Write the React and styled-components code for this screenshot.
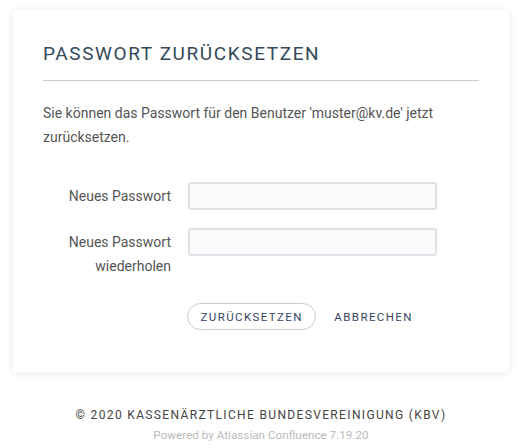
import React from "react";
import styled, { createGlobalStyle } from "styled-components";

const GlobalStyle = createGlobalStyle`
  body {
    margin: 0;
    background: #ffffff;
    font-family: Roboto, "Liberation Sans", sans-serif;
  }
  * {
    box-sizing: border-box;
  }
`;

const Page = styled.div`
  padding: 10px 18px 0 13px;
`;

const Card = styled.div`
  background: #ffffff;
  box-shadow: 0 1px 8px rgba(0, 0, 0, 0.09);
  padding: 32px 30px 42px 30px;
`;

const Heading = styled.h1`
  margin: 0;
  padding-bottom: 14px;
  border-bottom: 1px solid #cccccc;
  font-size: 19px;
  line-height: 24px;
  font-weight: 400;
  letter-spacing: 1.6px;
  color: #34495a;
`;

const Intro = styled.p`
  margin: 20px 0 0 0;
  font-size: 14px;
  line-height: 24px;
  color: #555555;
`;

const Form = styled.form`
  margin-top: 33px;
  display: flex;
  flex-direction: column;
  gap: 18px;
`;

const Row = styled.div`
  display: flex;
  align-items: flex-start;
  gap: 17px;
`;

const Label = styled.label`
  width: 128px;
  flex-shrink: 0;
  text-align: right;
  font-size: 14px;
  line-height: 24px;
  padding-top: 2px;
  color: #555555;
`;

const Input = styled.input`
  width: 249px;
  height: 28px;
  background: #fafbfc;
  border: 2px solid #dfe1e6;
  border-radius: 3px;
  outline: none;
`;

const Actions = styled.div`
  display: flex;
  align-items: center;
  gap: 18px;
  margin-left: 144px;
  margin-top: 7px;
`;

const Button = styled.button`
  height: 27px;
  padding: 0 ${(p) => (p.$outline ? "12.5px" : "0")};
  background: transparent;
  border: ${(p) => (p.$outline ? "1px solid #cccccc" : "none")};
  border-radius: 14px;
  font-family: inherit;
  font-size: 11.5px;
  letter-spacing: 1.4px;
  color: #344563;
  cursor: pointer;
`;

const Footer = styled.footer`
  margin-top: 34px;
  text-align: center;
`;

const Copyright = styled.div`
  font-size: 12px;
  line-height: 18px;
  letter-spacing: 1.35px;
  color: #444444;
`;

const Powered = styled.div`
  margin-top: 3px;
  font-size: 11.7px;
  line-height: 16px;
  color: #bbbbbb;
`;

export default function App() {
  return (
    <>
      <GlobalStyle />
      <Page>
        <Card>
          <Heading>PASSWORT ZURÜCKSETZEN</Heading>
          <Intro>
            Sie können das Passwort für den Benutzer 'muster@kv.de' jetzt
            zurücksetzen.
          </Intro>
          <Form onSubmit={(e) => e.preventDefault()}>
            <Row>
              <Label htmlFor="pw1">Neues Passwort</Label>
              <Input id="pw1" type="password" />
            </Row>
            <Row>
              <Label htmlFor="pw2">Neues Passwort wiederholen</Label>
              <Input id="pw2" type="password" />
            </Row>
            <Actions>
              <Button type="submit" $outline>
                ZURÜCKSETZEN
              </Button>
              <Button type="button">ABBRECHEN</Button>
            </Actions>
          </Form>
        </Card>
        <Footer>
          <Copyright>© 2020 KASSENÄRZTLICHE BUNDESVEREINIGUNG (KBV)</Copyright>
          <Powered>Powered by Atlassian Confluence 7.19.20</Powered>
        </Footer>
      </Page>
    </>
  );
}
